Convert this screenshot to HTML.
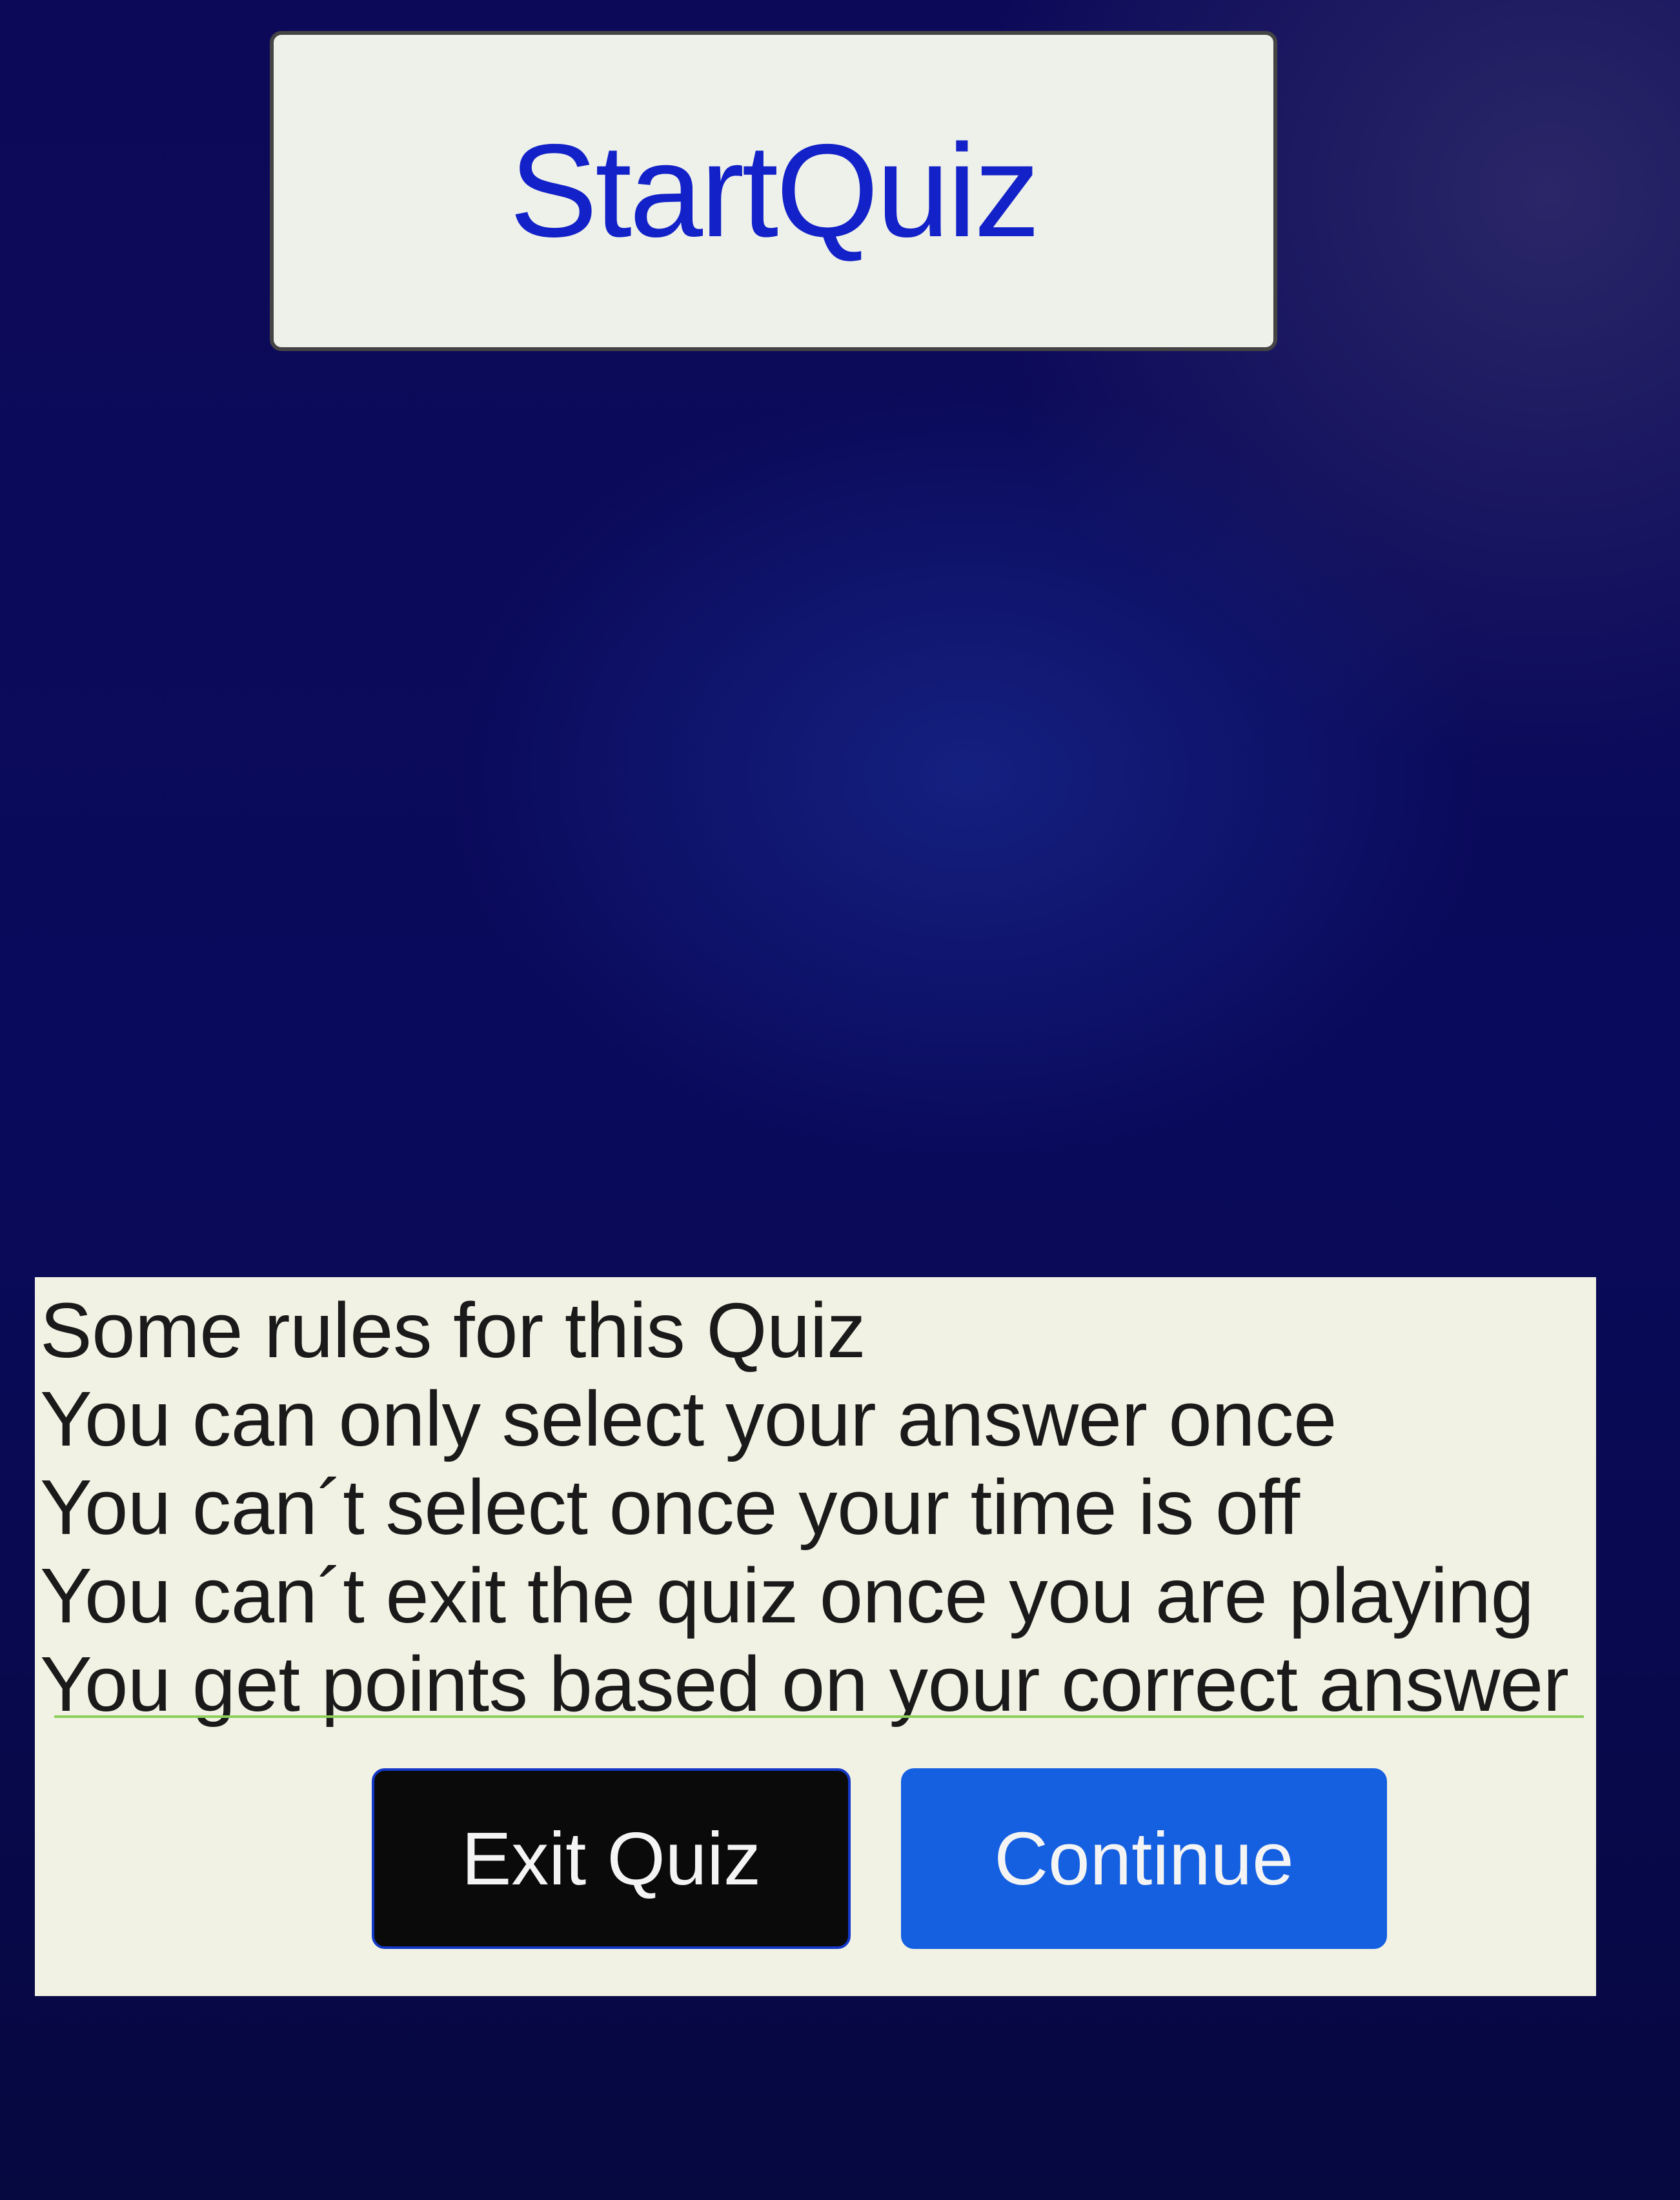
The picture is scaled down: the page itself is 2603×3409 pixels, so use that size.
<!DOCTYPE html>
<html><head><style>
body{margin:0;width:2603px;height:3409px;overflow:hidden;font-family:"Liberation Sans",sans-serif;
background:radial-gradient(ellipse 800px 600px at 1500px 1200px,#142080 0%,rgba(20,20,110,0) 100%),
radial-gradient(ellipse 900px 900px at 2400px 300px,#2a2668 0%,rgba(20,20,90,0) 100%),
linear-gradient(180deg,#0c0a58 0%,#0a0a5c 50%,#060840 100%);position:relative}
.start{position:absolute;left:418px;top:48px;width:1561px;height:496px;background:#eef0ea;border-radius:18px;border:6px solid #444;box-sizing:border-box;
display:flex;align-items:center;justify-content:center;color:#1222c8;font-size:205px;letter-spacing:-4px}
.box{position:absolute;left:54px;top:1979px;width:2419px;height:1114px;background:#f2f2e4}
.rules{position:absolute;left:8px;top:14px;font-size:121px;line-height:137px;color:#1a1a1a;white-space:nowrap;letter-spacing:-0.5px}
.line{position:absolute;left:30px;top:679px;width:2370px;height:4px;background:#8ccf5a}
.btn{position:absolute;top:761px;height:280px;border-radius:20px;display:flex;align-items:center;justify-content:center;color:#f4f4f4;font-size:116px}
</style></head><body>
<div class="start">StartQuiz</div>
<div class="box">
<div class="rules">Some rules for this Quiz<br>You can only select your answer once<br>You can´t select once your time is off<br>You can´t exit the quiz once you are playing<br>You get points based on your correct answer</div>
<div class="line"></div>
<div class="btn" style="left:522px;width:742px;background:#0a0a0a;border:4px solid #1438c8;box-sizing:border-box">Exit Quiz</div>
<div class="btn" style="left:1342px;width:753px;background:#1560e0">Continue</div>
</div>
</body></html>
